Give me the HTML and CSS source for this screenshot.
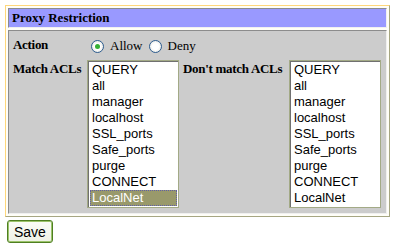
FILE: index.html
```html
<!DOCTYPE html>
<html lang="en">
<head>
  <meta charset="UTF-8">
  <title>Proxy Restriction</title>
  <link rel="stylesheet" href="styles.css">
</head>
<body>

  <form class="panel">
    <div class="panel-title">Proxy Restriction</div>
    <div class="panel-body">
      <div class="lbl">Action</div>
      <div class="radios">
        <label><span class="radio checked"></span>Allow</label>
        <label><span class="radio"></span>Deny</label>
      </div>

      <div class="lbl">Match ACLs</div>
      <div class="listbox">
        <div>QUERY</div>
        <div>all</div>
        <div>manager</div>
        <div>localhost</div>
        <div>SSL_ports</div>
        <div>Safe_ports</div>
        <div>purge</div>
        <div>CONNECT</div>
        <div class="sel">LocalNet</div>
      </div>

      <div class="lbl">Don't match ACLs</div>
      <div class="listbox">
        <div>QUERY</div>
        <div>all</div>
        <div>manager</div>
        <div>localhost</div>
        <div>SSL_ports</div>
        <div>Safe_ports</div>
        <div>purge</div>
        <div>CONNECT</div>
        <div>LocalNet</div>
      </div>
    </div>
  </form>

  <button class="save-btn">Save</button>

</body>
</html>
```

FILE: styles.css
```css
body {
  margin: 5px;
  background: #fff;
  font-family: "Liberation Serif", "Times New Roman", serif;
  font-size: 13px;
  color: #000;
}
.panel {
  width: 385px;
  box-sizing: border-box;
  display: flex;
  flex-direction: column;
  gap: 2px;
  padding: 2px;
  margin: 0;
  border: 1px solid;
  border-color: #ffd77a #a6a682 #a6a682 #ffd77a;
  background: #fffef8;
}
.panel-title {
  height: 20px;
  box-sizing: border-box;
  padding: 1px 3px;
  background: #9999ff;
  border: 1px solid;
  border-color: #8c8c8c #f0f0f0 #f0f0f0 #8c8c8c;
  font-weight: bold;
  line-height: 16px;
}
.panel-body {
  background: #cccccc;
  border: 1px solid;
  border-color: #8c8c8c #f0f0f0 #f0f0f0 #8c8c8c;
  padding: 5px 4px 5px 4px;
  display: grid;
  grid-template-columns: 70px 92px 102px 92px;
  column-gap: 4px;
  row-gap: 4px;
  align-items: start;
}
.lbl {
  font-weight: bold;
  line-height: 16px;
  padding-top: 1px;
  white-space: nowrap;
  letter-spacing: -0.3px;
}
.radios {
  grid-column: 2 / 5;
  display: flex;
  align-items: center;
  gap: 6px;
  height: 20px;
  margin-left: 4px;
  white-space: nowrap;
}
.radios label {
  display: flex;
  align-items: center;
  gap: 6px;
}
.radio {
  width: 11px;
  height: 11px;
  border-radius: 50%;
  border: 1px solid #2d5c8f;
  background: radial-gradient(circle, #fff 40%, #dcdcd4 100%);
  position: relative;
}
.radio.checked::after {
  content: "";
  position: absolute;
  left: 3px;
  top: 3px;
  width: 5px;
  height: 5px;
  border-radius: 50%;
  background: #36b035;
}
.listbox {
  box-sizing: border-box;
  width: 92px;
  border: 1px solid #a3aa86;
  box-shadow: inset 1px 1px 0 #707070;
  background: #fff;
  padding: 1px 1px 1px 2px;
  font-family: "Liberation Sans", Arial, sans-serif;
  font-size: 13px;
  line-height: 16px;
}
.listbox div {
  padding-left: 2px;
}
.listbox .sel {
  background: #99996b;
  color: #fff;
  outline: 1px dotted #5e5ea8;
  outline-offset: -1px;
}
.save-btn {
  margin: 3px 0 0 2px;
  padding: 1px 6px;
  height: 23px;
  font-family: "Liberation Sans", Arial, sans-serif;
  font-size: 14px;
  color: #000;
  background: linear-gradient(#fbfcf8, #eef2e6);
  border: 1px solid #4f7f22;
  border-radius: 3px;
  box-shadow: inset 0 0 0 1px #9cc46b;
}
```
